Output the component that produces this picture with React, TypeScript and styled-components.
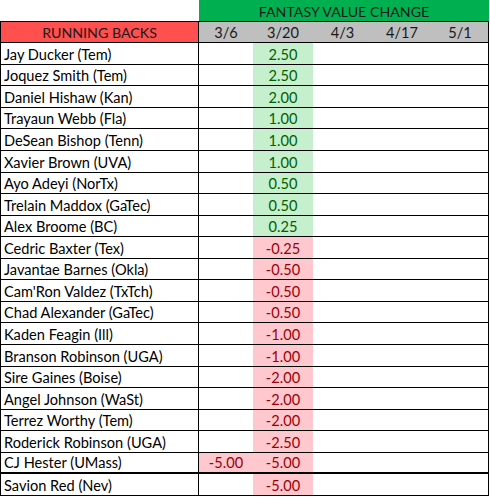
import React from "react";
import styled, { createGlobalStyle } from "styled-components";

const Global = createGlobalStyle`
  html, body { margin: 0; padding: 0; background: #ffffff; }
  body { font-family: Lato, "Liberation Sans", sans-serif; }
`;

type Tone = "good" | "bad" | "none";

interface Player {
  name: string;
  d36?: number;
  d320: number;
}

const players: Player[] = [
  { name: "Jay Ducker (Tem)", d320: 2.5 },
  { name: "Joquez Smith (Tem)", d320: 2.5 },
  { name: "Daniel Hishaw (Kan)", d320: 2.0 },
  { name: "Trayaun Webb (Fla)", d320: 1.0 },
  { name: "DeSean Bishop (Tenn)", d320: 1.0 },
  { name: "Xavier Brown (UVA)", d320: 1.0 },
  { name: "Ayo Adeyi (NorTx)", d320: 0.5 },
  { name: "Trelain Maddox (GaTec)", d320: 0.5 },
  { name: "Alex Broome (BC)", d320: 0.25 },
  { name: "Cedric Baxter (Tex)", d320: -0.25 },
  { name: "Javantae Barnes (Okla)", d320: -0.5 },
  { name: "Cam'Ron Valdez (TxTch)", d320: -0.5 },
  { name: "Chad Alexander (GaTec)", d320: -0.5 },
  { name: "Kaden Feagin (Ill)", d320: -1.0 },
  { name: "Branson Robinson (UGA)", d320: -1.0 },
  { name: "Sire Gaines (Boise)", d320: -2.0 },
  { name: "Angel Johnson (WaSt)", d320: -2.0 },
  { name: "Terrez Worthy (Tem)", d320: -2.0 },
  { name: "Roderick Robinson (UGA)", d320: -2.5 },
  { name: "CJ Hester (UMass)", d36: -5.0, d320: -5.0 },
  { name: "Savion Red (Nev)", d320: -5.0 },
];

const dates = ["3/6", "3/20", "4/3", "4/17", "5/1"];

const Sheet = styled.div`
  display: grid;
  grid-template-columns: 199px 54px 60px 59px 60px 57px;
  grid-template-rows: repeat(23, 1fr);
  width: 489px;
  height: 496px;
  font-size: 14.6px;
  color: #000;
`;

const Blank = styled.div`
  border-bottom: 1px solid #000;
`;

const GroupTitle = styled.div`
  grid-column: 2 / span 5;
  background: #00b050;
  border-bottom: 1px solid #000;
  display: flex;
  align-items: flex-end;
  justify-content: center;
  padding-bottom: 1px;
  color: #1a1a1a;
  font-size: 14.2px;
`;

const Cell = styled.div<{ $tone?: Tone; $first?: boolean; $last?: boolean; $thick?: boolean; $align?: "left" | "center" }>`
  box-sizing: border-box;
  display: flex;
  align-items: flex-end;
  justify-content: ${(p) => (p.$align === "left" ? "flex-start" : "center")};
  padding: 0 0 1px ${(p) => (p.$align === "left" ? "3px" : "0")};
  white-space: nowrap;
  overflow: hidden;
  border-bottom: ${(p) => (p.$thick ? "2px" : "1px")} solid #000;
  border-left: ${(p) => (p.$first ? "1px solid #000" : "none")};
  border-right: ${(p) => (p.$first || p.$last ? "1px solid #000" : "none")};
  background: ${(p) =>
    p.$tone === "good" ? "#c6efce" : p.$tone === "bad" ? "#ffc7ce" : "transparent"};
  color: ${(p) =>
    p.$tone === "good" ? "#006100" : p.$tone === "bad" ? "#9c0006" : "#000"};
`;

const CategoryCell = styled(Cell)`
  background: #ff4f4f;
  color: #1a1a1a;
  font-size: 14.2px;
`;

const DateCell = styled(Cell)`
  background: #bfbfbf;
  color: #1a1a1a;
`;

const toneOf = (v?: number): Tone => (v === undefined ? "none" : v >= 0 ? "good" : "bad");
const fmt = (v?: number) => (v === undefined ? "" : v.toFixed(2));

export default function App() {
  return (
    <>
      <Global />
      <Sheet>
        <Blank />
        <GroupTitle>FANTASY VALUE CHANGE</GroupTitle>

        <CategoryCell $first>RUNNING BACKS</CategoryCell>
        {dates.map((d, i) => (
          <DateCell key={d} $last={i === dates.length - 1}>
            {d}
          </DateCell>
        ))}

        {players.map((p, idx) => {
          const thick = idx === players.length - 2;
          return (
            <React.Fragment key={p.name}>
              <Cell $first $align="left" $thick={thick}>
                {p.name}
              </Cell>
              <Cell $tone={toneOf(p.d36)} $thick={thick}>
                {fmt(p.d36)}
              </Cell>
              <Cell $tone={toneOf(p.d320)} $thick={thick}>
                {fmt(p.d320)}
              </Cell>
              <Cell $thick={thick} />
              <Cell $thick={thick} />
              <Cell $last $thick={thick} />
            </React.Fragment>
          );
        })}
      </Sheet>
    </>
  );
}
